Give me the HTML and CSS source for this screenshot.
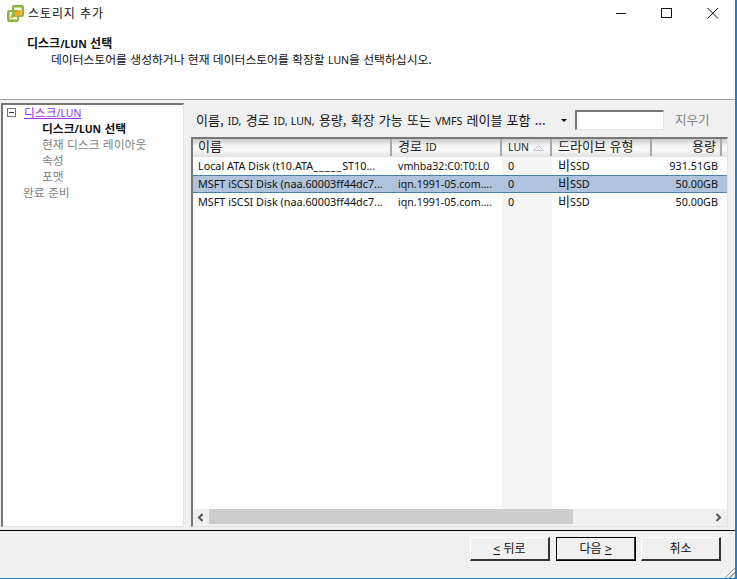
FILE: index.html
```html
<!DOCTYPE html>
<html lang="ko">
<head>
<meta charset="utf-8">
<title>스토리지 추가</title>
<link rel="stylesheet" href="styles.css">
</head>
<body>
<div class="window">
  <header class="head">
    <div class="titlebar">
      <svg class="logo" width="17" height="17" viewBox="0 0 17 17">
        <path d="M5 1.500a2 2 0 0 1 2-1.500h8a2 2 0 0 1 2 2v8a2 2 0 0 1-2 2h-3v3a2 2 0 0 1-2 2H2a2 2 0 0 1-2-2V7a2 2 0 0 1 2-2h3z" fill="#8fb33c"/>
        <path d="M7 2.500h7.500v7H12V7a2 2 0 0 0-2-2H7zM2.500 7H5v3a2 2 0 0 0 2 2h3v2.500H2.500z" fill="#f6f6e8"/>
        <path d="M7.500 8.500L11 5h3v3.500l-3 3H8zM4 9l2 4H3.500z" fill="#f2a91d"/>
        <path d="M4 9.500l2.500 3-2.500 1z" fill="#e89a18"/>
      </svg>
      <span class="title">스토리지 추가</span>
      <div class="winbtns">
        <svg class="winbtn" width="12" height="12" viewBox="0 0 12 12"><path d="M1 6.500h10" stroke="#111" fill="none"/></svg>
        <svg class="winbtn" width="12" height="12" viewBox="0 0 12 12"><rect x=".5" y="1.500" width="10" height="9" stroke="#111" fill="none"/></svg>
        <svg class="winbtn" width="12" height="12" viewBox="0 0 12 12"><path d="M.5 1l10.500 10.500M11 1L.5 11.500" stroke="#111" fill="none"/></svg>
      </div>
    </div>
    <div class="heading">디스크<span class="lat">/LUN</span> 선택</div>
    <div class="subheading">데이터스토어를 생성하거나 현재 데이터스토어를 확장할 <span class="lat">LUN</span>을 선택하십시오.</div>
  </header>

  <main class="body">
    <nav class="tree">
      <div class="tree-row">
        <span class="collapse"></span>
        <a class="link">디스크<span class="lat">/LUN</span></a>
      </div>
      <div class="tree-child current">디스크<span class="lat">/LUN</span> 선택</div>
      <div class="tree-child">현재 디스크 레이아웃</div>
      <div class="tree-child">속성</div>
      <div class="tree-child">포맷</div>
      <div class="tree-top">완료 준비</div>
    </nav>

    <section class="content">
      <div class="filter">
        <span class="filter-label">이름, <span class="lat">ID,</span> 경로 <span class="lat">ID, LUN,</span> 용량, 확장 가능 또는 <span class="lat">VMFS</span> 레이블 포함 ...</span>
        <span class="caret"></span>
        <span class="filter-input"></span>
        <span class="clear">지우기</span>
      </div>

      <div class="table">
        <div class="thead">
          <div class="th c1">이름</div>
          <div class="th c2">경로 <span class="lat">ID</span></div>
          <div class="th c3"><span class="lat">LUN</span><svg class="sort" width="11" height="6" viewBox="0 0 11 6"><path d="M.5 5.500L5.500 .5l5 5z" fill="none" stroke="#c4c4c4"/></svg></div>
          <div class="th c4">드라이브 유형</div>
          <div class="th c5">용량</div>
          <div class="th c6"></div>
        </div>
        <div class="tbody">
          <div class="row">
            <div class="td c1">Local ATA Disk (t10.ATA<span class="us">_____</span>ST10...</div>
            <div class="td c2">vmhba32:C0:T0:L0</div>
            <div class="td c3 sorted">0</div>
            <div class="td c4"><span class="kr-big">비</span><span>SSD</span></div>
            <div class="td c5 right">931.51GB</div>
          </div>
          <div class="row selected">
            <div class="td c1">MSFT iSCSI Disk (naa.60003ff44dc7...</div>
            <div class="td c2">iqn.1991-05.com....</div>
            <div class="td c3">0</div>
            <div class="td c4"><span class="kr-big">비</span><span>SSD</span></div>
            <div class="td c5 right">50.00GB</div>
          </div>
          <div class="row">
            <div class="td c1">MSFT iSCSI Disk (naa.60003ff44dc7...</div>
            <div class="td c2">iqn.1991-05.com....</div>
            <div class="td c3 sorted">0</div>
            <div class="td c4"><span class="kr-big">비</span><span>SSD</span></div>
            <div class="td c5 right">50.00GB</div>
          </div>
          <div class="sorted-fill"></div>
        </div>
        <div class="hscroll">
          <svg class="arrow" width="7" height="9" viewBox="0 0 7 9"><path d="M5.500 1L2 4.500 5.500 8" fill="none" stroke="#555" stroke-width="2"/></svg>
          <div class="track"><div class="thumb"></div></div>
          <svg class="arrow" width="7" height="9" viewBox="0 0 7 9"><path d="M1.500 1L5 4.500 1.500 8" fill="none" stroke="#555" stroke-width="2"/></svg>
        </div>
      </div>
    </section>
  </main>

  <footer class="foot">
    <button class="btn"><u>&lt;</u> 뒤로</button>
    <button class="btn primary">다음 <u>&gt;</u></button>
    <button class="btn last">취소</button>
    <span class="grip"></span>
  </footer>
</div>
</body>
</html>
```
FILE: styles.css
```css
* { box-sizing: border-box; }
html, body { margin: 0; padding: 0; }
body {
  width: 737px;
  height: 579px;
  overflow: hidden;
  font-family: "Noto Sans CJK KR", sans-serif;
  font-size: 12px;
  color: #111;
  background: #fff;
}
.lat { font-family: "Noto Sans", sans-serif; font-size: 10.5px; }
.window {
  width: 737px;
  height: 579px;
  display: flex;
  flex-direction: column;
  border-right: 2px solid #1883d7;
  border-bottom: 1px solid #1883d7;
  background: #f0f0f0;
}
.head {
  height: 100px;
  flex: none;
  background: #fff;
  border-bottom: 1px solid #a0a0a0;
}
.titlebar {
  height: 27px;
  display: flex;
  align-items: center;
  padding-left: 7px;
}
.logo { flex: none; margin-top: -1px; }
.title {
  margin-left: 4px;
  font-size: 12px;
  line-height: 18px;
  margin-top: -1px;
  letter-spacing: .9px;
}
.winbtns {
  margin-left: auto;
  display: flex;
  gap: 34px;
  margin-right: 16px;
  margin-top: -1px;
}
.heading {
  margin: 8px 0 0 27px;
  font-weight: 700;
  line-height: 16px;
}
.heading .lat { font-weight: 700; }
.subheading {
  margin: -1px 0 0 51px;
  font-size: 11.8px;
  line-height: 16px;
}
.body {
  flex: 1;
  min-height: 0;
  display: flex;
  gap: 7px;
  padding: 3px 7px 3px 1px;
  border-bottom: 1px solid #000;
}
.tree {
  width: 183px;
  flex: none;
  background: #fff;
  border: 1px solid #e3e3e3;
  border-top: 2px solid #777;
  border-left: 2px solid #777;
  font-size: 11.8px;
}
.tree-row {
  height: 16px;
  display: flex;
  align-items: center;
  margin-top: -1px;
  padding-left: 4px;
}
.collapse {
  width: 9px;
  height: 9px;
  border: 1px solid #777;
  position: relative;
  flex: none;
}
.collapse::after {
  content: "";
  position: absolute;
  left: 1px;
  top: 3px;
  width: 5px;
  height: 1px;
  background: #333;
}
.link {
  margin-left: 8px;
  color: #9933ee;
  text-decoration: underline;
  line-height: 16px;
}
.tree-child {
  margin-left: 39px;
  height: 16px;
  line-height: 16px;
  color: #808080;
}
.tree-child.current {
  color: #111;
  font-weight: 700;
}
.current .lat { font-weight: 700; }
.tree-top {
  margin-left: 20px;
  height: 16px;
  line-height: 16px;
  color: #808080;
}
.content {
  flex: 1;
  min-width: 0;
  display: flex;
  flex-direction: column;
}
.filter {
  height: 34px;
  flex: none;
  display: flex;
  align-items: center;
  padding-left: 5px;
}
.filter-label {
  width: 365px;
  white-space: nowrap;
  overflow: hidden;
  margin-top: -2px;
  font-size: 13px;
  word-spacing: .6px;
}
.caret {
  width: 0;
  height: 0;
  border-left: 3px solid transparent;
  border-right: 3px solid transparent;
  border-top: 3px solid #111;
  flex: none;
}
.filter-input {
  width: 89px;
  height: 20px;
  margin-left: 8px;
  background: #fff;
  border: 1px solid #e3e3e3;
  border-top: 2px solid #777;
  border-left: 2px solid #777;
  flex: none;
}
.clear {
  margin-left: 11px;
  color: #808080;
  font-size: 12.5px;
  margin-top: -1px;
}
.table {
  flex: 1;
  min-height: 0;
  display: flex;
  flex-direction: column;
  background: #fff;
  border: 1px solid #e3e3e3;
  border-top: 2px solid #777;
  border-left: 2px solid #777;
}
.thead {
  height: 18px;
  flex: none;
  display: flex;
  background: linear-gradient(#c9c9c9 0, #f2f2f2 35%, #fafafa 60%, #e0e0e0 100%);
}
.th {
  height: 17px;
  line-height: 14px;
  padding-left: 6px;
  border-right: 2px solid #a8a8a8;
  font-size: 13px;
  white-space: nowrap;
  color: #222;
}
.th.c1 { padding-left: 5px; }
.th.c5 { text-align: right; padding-right: 4px; }
.c1 { width: 199px; flex: none; }
.c2 { width: 110px; flex: none; }
.c3 { width: 50px; flex: none; }
.c4 { width: 100px; flex: none; }
.c5 { width: 70px; flex: none; }
.th.c6 { flex: 1; border-right: 0; }
.sort { margin-left: 4px; }
.tbody {
  flex: 1;
  min-height: 0;
  display: flex;
  flex-direction: column;
}
.row {
  height: 18px;
  flex: none;
  display: flex;
  border-top: 1px solid transparent;
  border-bottom: 1px solid transparent;
}
.row.selected {
  background: #afc3dc;
  border-top-color: #4a7fae;
  border-bottom-color: #4a7fae;
}
.td {
  font-family: "Noto Sans", sans-serif;
  line-height: 16px;
  height: 16px;
  padding-left: 6px;
  white-space: nowrap;
  font-size: 10.8px;
}
.td.c1 { padding-left: 5px; }
.td.c4 { display: flex; align-items: center; }
.us { letter-spacing: 1px; }
.td.c2 { font-size: 10.6px; }
.td.right { text-align: right; padding-right: 4px; }
.td.sorted { background: #f5f5f5; height: 18px; margin: -1px 0; padding-top: 1px; }
.kr-big {
  font-family: "Noto Sans CJK KR", sans-serif;
  font-size: 13px;
  line-height: 16px;
  height: 16px;
  margin-top: -2px;
}
.sorted-fill {
  flex: 1;
  margin-left: 309px;
  width: 50px;
  background: #f5f5f5;
}
.hscroll {
  height: 17px;
  flex: none;
  display: flex;
  align-items: center;
  background: #f0f0f0;
}
.arrow { flex: none; margin: 0 5px 0 4px; }
.track {
  flex: 1;
  height: 15px;
  margin-top: -2px;
}
.thumb {
  width: 364px;
  height: 100%;
  background: #cdcdcd;
}
.foot {
  height: 47px;
  flex: none;
  position: relative;
  display: flex;
  align-items: flex-start;
  padding: 6px 0 0 470px;
  gap: 6px;
}
.btn {
  width: 80px;
  height: 24px;
  padding: 0 0 2px;
  background: #f0f0f0;
  border: 1px solid #fff;
  border-right: 2px solid #333;
  border-bottom: 2px solid #333;
  font-family: "Noto Sans CJK KR", sans-serif;
  font-size: 12px;
  color: #111;
}
.btn.last { margin-left: -1px; }
.btn.primary {
  outline: 1px solid #000;
  outline-offset: -1px;
}
.grip {
  position: absolute;
  right: 0;
  bottom: 0;
  width: 13px;
  height: 13px;
  background: repeating-linear-gradient(135deg, transparent 0 2px, #9a9a9a 2px 3px);
  clip-path: polygon(100% 0, 100% 100%, 0 100%);
}
```
